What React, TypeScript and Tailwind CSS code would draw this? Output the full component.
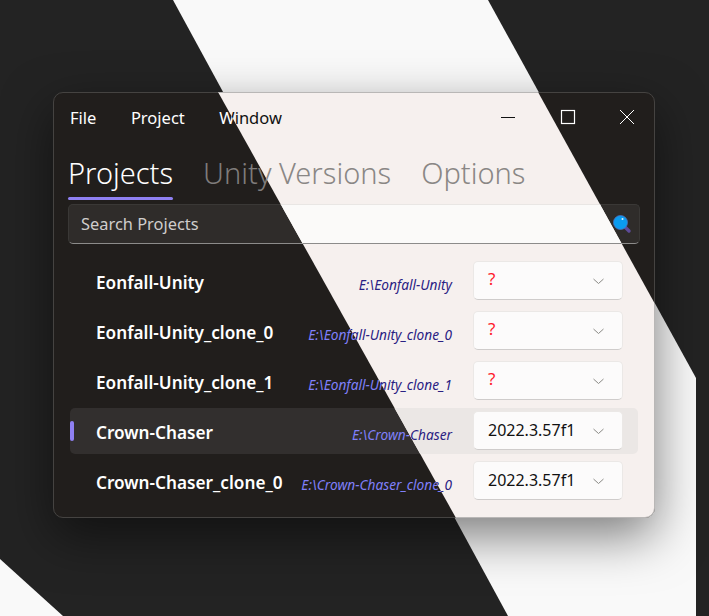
import React from "react";

const font = { fontFamily: '"Noto Sans", "Open Sans", sans-serif' };

const rows = [
  { name: "Eonfall-Unity", path: "E:\\Eonfall-Unity", version: "?" },
  { name: "Eonfall-Unity_clone_0", path: "E:\\Eonfall-Unity_clone_0", version: "?" },
  { name: "Eonfall-Unity_clone_1", path: "E:\\Eonfall-Unity_clone_1", version: "?" },
  { name: "Crown-Chaser", path: "E:\\Crown-Chaser", version: "2022.3.57f1", active: true },
  { name: "Crown-Chaser_clone_0", path: "E:\\Crown-Chaser_clone_0", version: "2022.3.57f1" },
];

const tones = {
  dark: {
    root: "bg-[#211e1c] border-[#454341]",
    text: "text-white",
    tab: "text-[#7f7c7b]",
    search: "bg-[#2f2c2a] border-[#3a3836] border-b-[#8c8b8a]",
    placeholder: "text-[#cfcdcc]",
    path: "text-[#8080fa]",
    rowActive: "bg-[#322f2e]",
    stroke: "#ffffff",
  },
  light: {
    root: "bg-[#f6f0ee] border-[#b9b7b6]",
    text: "text-[#111111]",
    tab: "text-[#8a8785]",
    search: "bg-[#fbfaf9] border-[#e9e6e4] border-b-[#8c8b8a]",
    placeholder: "text-[#555555]",
    path: "text-[#2a2183]",
    rowActive: "bg-[#ebe7e5]",
    stroke: "#111111",
  },
};

function Layer({ tone }: { tone: "dark" | "light" }) {
  const t = tones[tone];
  return (
    <div className={`flex h-full flex-col rounded-[10px] border ${t.root}`} style={font}>
      <div className="flex h-[50px] shrink-0 items-center pl-[16px]">
        <div className={`flex gap-[34.5px] text-[16.5px] ${t.text}`}>
          <span>File</span>
          <span>Project</span>
          <span>Window</span>
        </div>
        <div className="ml-auto flex items-center">
          <svg width="16" height="16" viewBox="0 0 16 16" className="mr-[44px] mb-[2px]">
            <path d="M1 8.5H15" stroke={t.stroke} strokeWidth="1" fill="none" />
          </svg>
          <svg width="16" height="16" viewBox="0 0 16 16" className="mr-[43px] mb-[2px]">
            <rect x="1.5" y="1.5" width="13" height="13" stroke={t.stroke} strokeWidth="1.2" fill="none" />
          </svg>
          <svg width="16" height="16" viewBox="0 0 16 16" className="mr-[19px] mb-[2px]">
            <path d="M1 1L15 15M15 1L1 15" stroke={t.stroke} strokeWidth="1" fill="none" />
          </svg>
        </div>
      </div>

      <div className="flex h-[60px] shrink-0 gap-[30px] pl-[14px] text-[29px] font-light leading-[60px]">
        <div className="relative">
          <span className={t.text}>Projects</span>
          <div className="absolute bottom-[3px] left-0 h-[3px] w-full rounded-full bg-[#8f80f2]" />
        </div>
        <span className={t.tab}>Unity Versions</span>
        <span className={t.tab}>Options</span>
      </div>

      <div className={`mx-[14px] mt-[1px] flex h-[40px] shrink-0 items-center justify-between rounded-[5px] border pl-[12px] pr-[7px] ${t.search}`}>
        <span className={`text-[16.4px] ${t.placeholder}`}>Search Projects</span>
        <svg width="20" height="20" viewBox="0 0 20 20">
          <path d="M11 11L17 17" stroke="#5e4b9a" strokeWidth="3.4" strokeLinecap="round" />
          <circle cx="8.5" cy="8.5" r="7" fill="#0a9cf0" stroke="#4a6fc0" strokeWidth="0.8" />
          <circle cx="10.5" cy="5" r="1" fill="#dff3ff" />
        </svg>
      </div>

      <div className="mt-[14px] flex flex-col gap-[4px] pl-[16px] pr-[16px]">
        {rows.map((r) => (
          <div key={r.name} className={`relative flex h-[46px] items-center rounded-[5px] ${r.active ? t.rowActive : ""}`}>
            {r.active && <div className="absolute left-0 top-[13px] h-[20px] w-[4px] rounded-full bg-[#8f80f2]" />}
            <span className={`pl-[26px] text-[17.2px] font-semibold ${t.text} mt-[3px]`}>{r.name}</span>
            <span className={`ml-auto mt-[8px] text-[13.7px] italic ${t.path}`}>{r.path}</span>
            <div className="mb-[2px] mr-[15px] ml-[21px] flex h-[39px] w-[150px] shrink-0 items-center justify-between rounded-[5px] border border-[#ebe8e6] border-b-[#cfcccb] bg-[#fcfbfb] pl-[14px] pr-[18px]">
              {r.version === "?" ? (
                <span className="mb-[2px] text-[17px] text-[#ff1a2d]">?</span>
              ) : (
                <span className="text-[16px] text-[#111111]">{r.version}</span>
              )}
              <svg width="11" height="7" viewBox="0 0 11 7" className="mt-[2px]">
                <path d="M0.5 1L5.5 5.5L10.5 1" stroke="#8a8a86" strokeWidth="1" fill="none" />
              </svg>
            </div>
          </div>
        ))}
      </div>
    </div>
  );
}

export default function App() {
  return (
    <div className="relative h-[616px] w-[709px] overflow-hidden bg-[#232323] pl-[53px] pt-[92px]">
      <svg className="absolute inset-0" width="709" height="616" viewBox="0 0 709 616">
        <polygon points="173,0 488,0 696,378 696,616 508,616" fill="#f9f9f9" />
        <polygon points="0,559 63,616 0,616" fill="#f9f9f9" />
      </svg>
      <div className="relative h-[426px] w-[602px] rounded-[10px] shadow-[0_18px_50px_rgba(0,0,0,0.5)]">
        <Layer tone="dark" />
        <div className="absolute inset-0 [clip-path:polygon(165px_0,485px_0,602px_212px,602px_426px,403px_426px)]" aria-hidden="true">
          <Layer tone="light" />
        </div>
      </div>
    </div>
  );
}
